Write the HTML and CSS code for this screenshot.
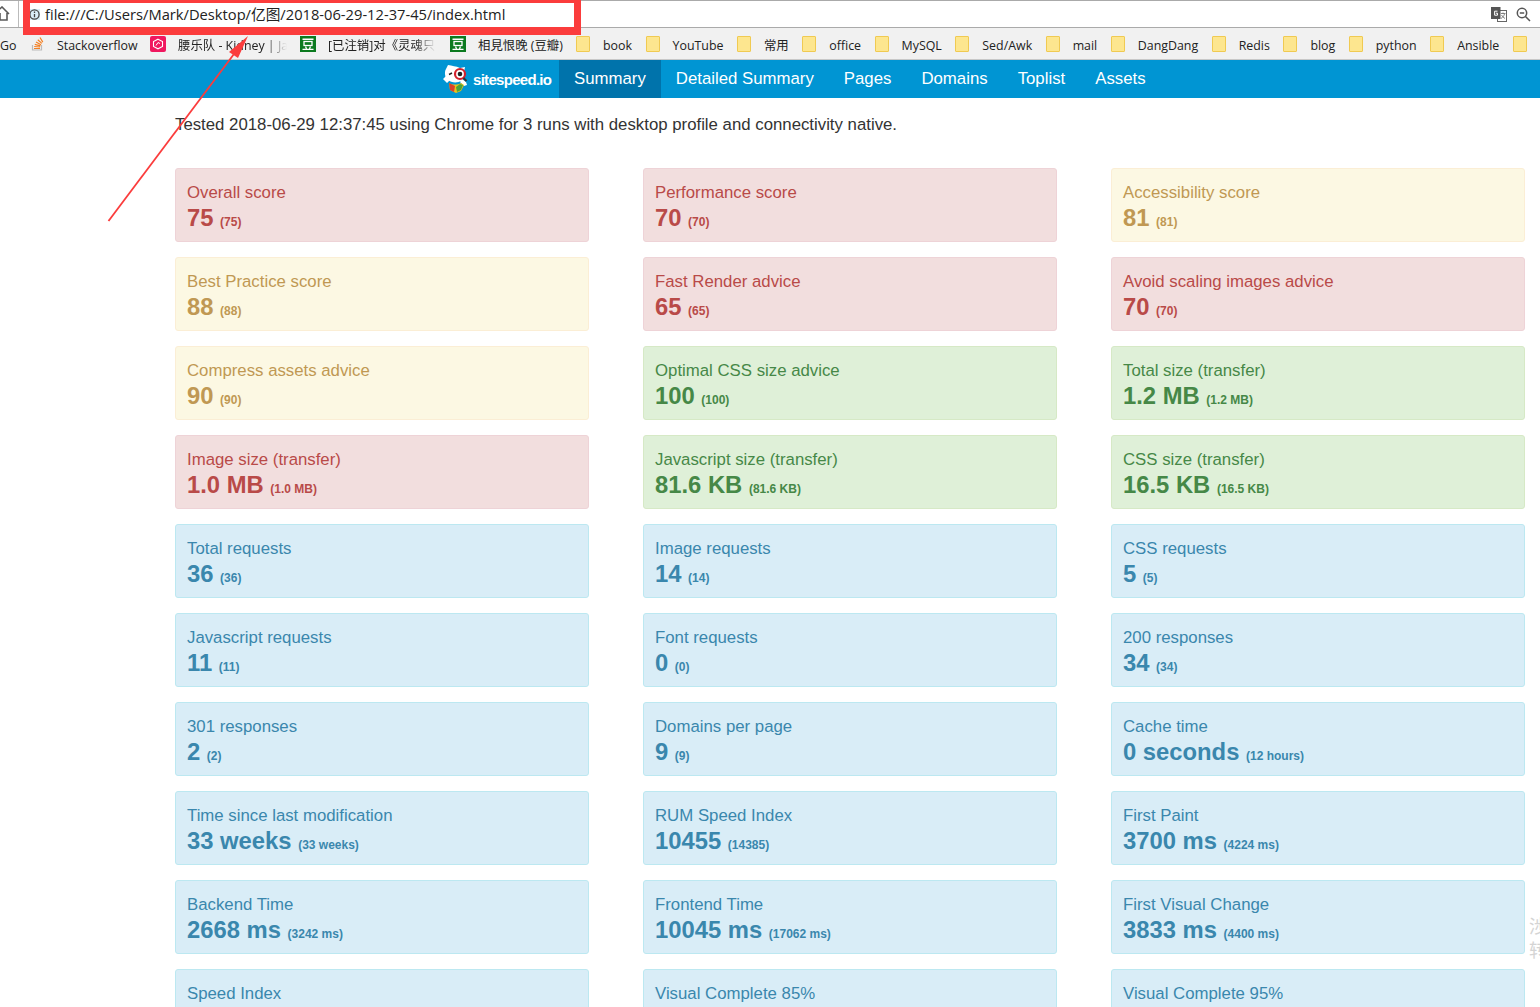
FILE: index.html
```html
<!DOCTYPE html>
<html lang="en">
<head>
<meta charset="utf-8">
<title>sitespeed.io summary</title>
<link rel="stylesheet" href="styles.css">
</head>
<body>
<header class="chrome">
  <div class="addressbar">
    <svg class="home" width="10" height="16" viewBox="0 0 10 16"><path d="M-6 8 2 1l7 7M0 7v7h7V7" fill="none" stroke="#5a5a5a" stroke-width="1.6"/></svg>
    <div class="omnibox">
      <svg class="info" width="11" height="11" viewBox="0 0 11 11"><circle cx="5.5" cy="5.5" r="4.6" fill="none" stroke="#444" stroke-width="1.3"/><path d="M5.5 2.6v1.3M5.5 4.9v3.4" stroke="#444" stroke-width="1.3"/></svg>
      <span class="url">file:///C:/Users/Mark/Desktop/亿图/2018-06-29-12-37-45/index.html</span>
      <span class="tools">
        <svg width="16" height="15" viewBox="0 0 16 15"><rect x="6.500" y="3.500" width="9" height="11" fill="#fff" stroke="#666"/><rect x="0" y="0" width="9.500" height="12" fill="#555"/><path d="M6.500 4.200H3.600v4H6.500V6.200H4.800" fill="none" stroke="#fff"/><path d="M10 6.500h4.500M12 5.500v1M13.500 7c-.5 2-2 3.500-3.500 4.500M10.500 8c.7 1.500 2 2.500 3.500 3.500" fill="none" stroke="#666" stroke-width=".8"/></svg>
        <svg width="15" height="15" viewBox="0 0 15 15"><circle cx="6" cy="6" r="4.700" fill="none" stroke="#555" stroke-width="1.500"/><path d="M3.800 6h4.400M9.500 9.500l4.500 4.500" fill="none" stroke="#555" stroke-width="1.500"/></svg>
      </span>
    </div>
  </div>
  <div class="bookmarks">
    <span class="bm bm-go">Go</span>
    <span class="bm bm-so"><svg class="so" width="13" height="15" viewBox="0 0 13 15"><path d="M1.500 9v5h9V9" fill="none" stroke="#bcbbbb" stroke-width="1.200"/><path d="M3 12.500h6M3.200 10.500l5.800.5M3.800 8.300l5.600 1.500M5 6l5 2.700M6.800 3.800l4 3.600M9 1.500l2.800 4.600" fill="none" stroke="#f48024" stroke-width="1.200"/></svg>Stackoverflow</span>
    <span class="bm bm-pink"><svg class="fav" width="16" height="16" viewBox="0 0 16 16"><rect width="16" height="16" rx="2" fill="#f0185f"/><path d="M8 3.200 12.500 5.500v5L8 12.800 3.500 10.500v-5z" fill="none" stroke="#fff" stroke-width="1.100"/><path d="M6 9.500 8 6.500l2 1" fill="none" stroke="#fff" stroke-width="1"/></svg><span class="fade fade-a">腰乐队 - Kidney | Ja</span></span>
    <span class="bm bm-db"><svg class="fav" width="16" height="16" viewBox="0 0 16 16"><rect width="16" height="16" fill="#0b7a1f"/><rect x="2.500" y="2.500" width="11" height="1.500" fill="#fff"/><rect x="4" y="5.500" width="8" height="4" fill="none" stroke="#fff" stroke-width="1.300"/><path d="M5.500 10.500l1 2.300M10.500 10.500l-1 2.300M2.500 13.300h11" fill="none" stroke="#fff" stroke-width="1.300"/></svg><span class="fade fade-b">[已注销]对《灵魂只能</span></span>
    <span class="bm bm-db2"><svg class="fav" width="16" height="16" viewBox="0 0 16 16"><rect width="16" height="16" fill="#0b7a1f"/><rect x="2.500" y="2.500" width="11" height="1.500" fill="#fff"/><rect x="4" y="5.500" width="8" height="4" fill="none" stroke="#fff" stroke-width="1.300"/><path d="M5.500 10.500l1 2.300M10.500 10.500l-1 2.300M2.500 13.300h11" fill="none" stroke="#fff" stroke-width="1.300"/></svg>相見恨晚 (豆瓣)</span>
    <span class="bm folder">book</span>
    <span class="bm folder">YouTube</span>
    <span class="bm folder">常用</span>
    <span class="bm folder">office</span>
    <span class="bm folder">MySQL</span>
    <span class="bm folder">Sed/Awk</span>
    <span class="bm folder">mail</span>
    <span class="bm folder">DangDang</span>
    <span class="bm folder">Redis</span>
    <span class="bm folder">blog</span>
    <span class="bm folder">python</span>
    <span class="bm folder">Ansible</span>
    <span class="bm folder"></span>
  </div>
</header>
<nav class="topnav">
  <a class="brand">
    <svg width="27" height="30" viewBox="0 0 27 30">
      <path d="M5 1 3 5C1 8 2 14 5 16c3 3 10 3 13 1 3-2 4-6 3-9l1-5-5 1C13 2 9 2 5 1z" fill="#fff"/>
      <path d="M3 12 0 15l4 4 3-3zM19 15l4 3 1 3-3 1-4-4z" fill="#fff"/>
      <path d="M6 19c3 2 9 2 12 0l3 2-3 6-5 2-6-3z" fill="#e9c31b"/>
      <path d="M6 19l1 7 4 2 1-6z" fill="#d9402c"/><path d="M13 23l1 5 4-2 2-5-3-1z" fill="#4aa33a"/>
      <circle cx="17" cy="10" r="5" fill="#fff" stroke="#d3202c" stroke-width="2.200"/><circle cx="17" cy="10" r="2.300" fill="#222"/>
      <path d="M6 10.500l3-1.500" stroke="#222" stroke-width="1.400"/>
      <path d="M20.500 14l3 3" stroke="#333" stroke-width="2"/>
    </svg>
    <span class="brand-name">sitespeed.io</span>
  </a>
  <a class="navlink active">Summary</a>
  <a class="navlink">Detailed Summary</a>
  <a class="navlink">Pages</a>
  <a class="navlink">Domains</a>
  <a class="navlink">Toplist</a>
  <a class="navlink">Assets</a>
</nav>
<main class="content">
  <p class="tested">Tested 2018-06-29 12:37:45 using Chrome for 3 runs with desktop profile and connectivity native.</p>
  <section class="grid">
    <div class="card bad"><div class="label">Overall score</div><div class="value">75 <small>(75)</small></div></div>
    <div class="card bad"><div class="label">Performance score</div><div class="value">70 <small>(70)</small></div></div>
    <div class="card warn"><div class="label">Accessibility score</div><div class="value">81 <small>(81)</small></div></div>
    <div class="card warn"><div class="label">Best Practice score</div><div class="value">88 <small>(88)</small></div></div>
    <div class="card bad"><div class="label">Fast Render advice</div><div class="value">65 <small>(65)</small></div></div>
    <div class="card bad"><div class="label">Avoid scaling images advice</div><div class="value">70 <small>(70)</small></div></div>
    <div class="card warn"><div class="label">Compress assets advice</div><div class="value">90 <small>(90)</small></div></div>
    <div class="card good"><div class="label">Optimal CSS size advice</div><div class="value">100 <small>(100)</small></div></div>
    <div class="card good"><div class="label">Total size (transfer)</div><div class="value">1.2 MB <small>(1.2 MB)</small></div></div>
    <div class="card bad"><div class="label">Image size (transfer)</div><div class="value">1.0 MB <small>(1.0 MB)</small></div></div>
    <div class="card good"><div class="label">Javascript size (transfer)</div><div class="value">81.6 KB <small>(81.6 KB)</small></div></div>
    <div class="card good"><div class="label">CSS size (transfer)</div><div class="value">16.5 KB <small>(16.5 KB)</small></div></div>
    <div class="card info"><div class="label">Total requests</div><div class="value">36 <small>(36)</small></div></div>
    <div class="card info"><div class="label">Image requests</div><div class="value">14 <small>(14)</small></div></div>
    <div class="card info"><div class="label">CSS requests</div><div class="value">5 <small>(5)</small></div></div>
    <div class="card info"><div class="label">Javascript requests</div><div class="value">11 <small>(11)</small></div></div>
    <div class="card info"><div class="label">Font requests</div><div class="value">0 <small>(0)</small></div></div>
    <div class="card info"><div class="label">200 responses</div><div class="value">34 <small>(34)</small></div></div>
    <div class="card info"><div class="label">301 responses</div><div class="value">2 <small>(2)</small></div></div>
    <div class="card info"><div class="label">Domains per page</div><div class="value">9 <small>(9)</small></div></div>
    <div class="card info"><div class="label">Cache time</div><div class="value">0 seconds <small>(12 hours)</small></div></div>
    <div class="card info"><div class="label">Time since last modification</div><div class="value">33 weeks <small>(33 weeks)</small></div></div>
    <div class="card info"><div class="label">RUM Speed Index</div><div class="value">10455 <small>(14385)</small></div></div>
    <div class="card info"><div class="label">First Paint</div><div class="value">3700 ms <small>(4224 ms)</small></div></div>
    <div class="card info"><div class="label">Backend Time</div><div class="value">2668 ms <small>(3242 ms)</small></div></div>
    <div class="card info"><div class="label">Frontend Time</div><div class="value">10045 ms <small>(17062 ms)</small></div></div>
    <div class="card info"><div class="label">First Visual Change</div><div class="value">3833 ms <small>(4400 ms)</small></div></div>
    <div class="card info"><div class="label">Speed Index</div></div>
    <div class="card info"><div class="label">Visual Complete 85%</div></div>
    <div class="card info"><div class="label">Visual Complete 95%</div></div>
  </section>
</main>
<div class="redbox"></div>
<svg class="arrow" width="260" height="230" viewBox="0 0 260 230"><path d="M108.500 221 240 46" fill="none" stroke="#fb3c3c" stroke-width="1.800"/><path d="M248 36 229 52l9 6z" fill="#fb3c3c"/></svg>
<div class="watermark">涉<br>转</div>
</body>
</html>
```
FILE: styles.css
```css
* { box-sizing: border-box; }
html, body { margin: 0; height: 1007px; overflow: hidden; background: #fff; }
body { font-family: "Liberation Sans", Arial, sans-serif; color: #333; position: relative; }

.chrome { height: 60px; background: #f1f1f1; border-bottom: 1px solid #c8c8c8; }
.addressbar { height: 28px; background: #fff; border-top: 1px solid #aaa; border-bottom: 1px solid #aaa; display: flex; align-items: center; }
.home { flex: none; margin-top: -1px; }
.omnibox { flex: 1; height: 100%; margin-left: 8px; border-left: 1px solid #bbb; padding-left: 10px; display: flex; align-items: center; }
.info { flex: none; }
.url { margin-left: 5px; margin-top: -2px; font: 14.700px "Open Sans", "Noto Sans CJK SC", sans-serif; color: #222; white-space: nowrap; }
.tools { margin-left: auto; padding-right: 9px; display: flex; gap: 9px; align-items: center; }

.bookmarks { height: 31px; padding-top: 3px; display: flex; align-items: center; font: 12.400px "Open Sans", "Noto Sans CJK SC", sans-serif; color: #222; white-space: nowrap; overflow: hidden; }
.bm { display: inline-flex; align-items: center; flex: none; }
.bm-go { width: 31px; }
.bm-so { width: 119px; }
.so { margin-right: 13px; }
.bm-pink { width: 150px; }
.bm-db { width: 150px; }
.bm-db2 { width: 126px; }
.fav { flex: none; margin-right: 12px; margin-top: -3px; }
.so { margin-top: -3px; }
.fade { display: block; overflow: hidden; -webkit-mask-image: linear-gradient(to right, #000 80%, transparent); mask-image: linear-gradient(to right, #000 80%, transparent); }
.fade-a { width: 109px; }
.fade-b { width: 108px; }
.folder { margin-right: 13.500px; }
.folder::before { content: ""; width: 12px; height: 14px; margin-right: 13px; margin-top: -3px; background: #fde68f; border: 1px solid #f0ca52; border-radius: 1px; }

.topnav { height: 38px; background: #0095d3; display: flex; padding-left: 443px; }
.brand { width: 116px; display: flex; align-items: center; gap: 3px; color: #fff; }
.brand-name { font-size: 15px; font-weight: bold; letter-spacing: -.7px; }
.navlink { padding: 0 15px; line-height: 37px; font-size: 16.800px; color: #fff; }
.navlink.active { background: #0073ab; }

.content { padding: 17px 0 0 175px; }
.tested { margin: 0 0 34px; font-size: 16.800px; line-height: 19px; color: #333; }
.grid { display: grid; grid-template-columns: repeat(3, 414px); column-gap: 54px; row-gap: 15px; }
.card { height: 74px; padding: 14px 11px; border: 1px solid; border-radius: 3px; }
.label { font-size: 16.800px; line-height: 20px; }
.value { font-size: 23.800px; font-weight: bold; line-height: 30px; }
.value small { font-size: 12px; }
.bad { background: #f2dede; border-color: #eed3d7; color: #b94a48; }
.warn { background: #fcf8e3; border-color: #fbeed5; color: #c09853; }
.good { background: #dff0d8; border-color: #d6e9c6; color: #468847; }
.info { background: #d9edf7; border-color: #bce8f1; color: #3a87ad; }

.redbox { position: absolute; left: 23px; top: 0; width: 558px; height: 35px; border: 7px solid #fb3c3c; border-top-width: 3px; border-bottom-width: 8px; }
.arrow { position: absolute; left: 0; top: 0; }
.watermark { position: absolute; left: 1529px; top: 913px; font: 18px/24px "Noto Sans CJK SC", sans-serif; color: #d4d4d4; }
```
